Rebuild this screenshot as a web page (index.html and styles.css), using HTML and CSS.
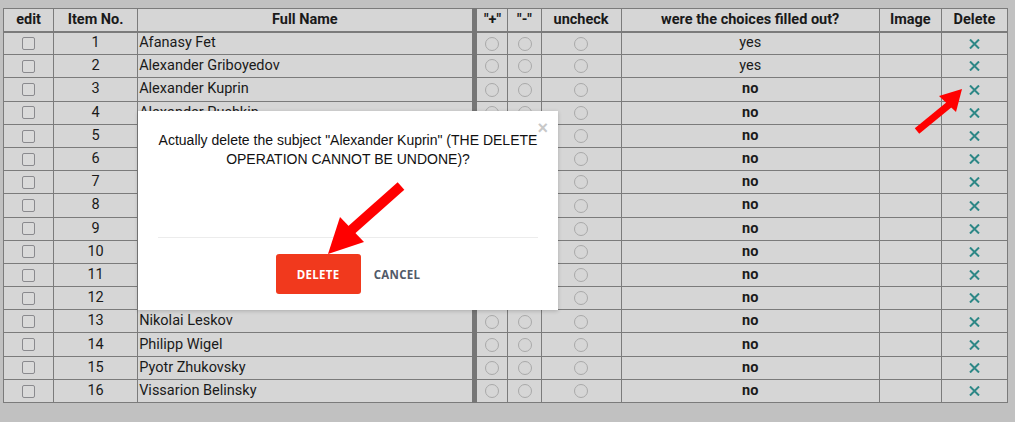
FILE: index.html
```html
<!DOCTYPE html>
<html>
<head>
<meta charset="utf-8">
<link rel="stylesheet" href="styles.css">
</head>
<body>
<div class="page">
<table class="grid">
  <colgroup>
    <col class="c-edit"><col class="c-no"><col class="c-name"><col class="c-plus"><col class="c-minus"><col class="c-unc"><col class="c-fill"><col class="c-img"><col class="c-del">
  </colgroup>
  <thead>
    <tr><th>edit</th><th>Item No.</th><th class="name sep">Full Name</th><th>"+"</th><th>"-"</th><th>uncheck</th><th>were the choices filled out?</th><th>Image</th><th>Delete</th></tr>
  </thead>
  <tbody>
    <tr><td><span class="cb"></span></td><td>1</td><td class="name sep">Afanasy Fet</td><td><span class="rd"></span></td><td><span class="rd"></span></td><td><span class="rd"></span></td><td>yes</td><td></td><td><svg class="x" viewBox="0 0 11 10"><path d="M1 0.5L10 9.5M10 0.5L1 9.5"/></svg></td></tr>
    <tr><td><span class="cb"></span></td><td>2</td><td class="name sep">Alexander Griboyedov</td><td><span class="rd"></span></td><td><span class="rd"></span></td><td><span class="rd"></span></td><td>yes</td><td></td><td><svg class="x" viewBox="0 0 11 10"><path d="M1 0.5L10 9.5M10 0.5L1 9.5"/></svg></td></tr>
    <tr><td><span class="cb"></span></td><td>3</td><td class="name sep">Alexander Kuprin</td><td><span class="rd"></span></td><td><span class="rd"></span></td><td><span class="rd"></span></td><td class="b">no</td><td></td><td><svg class="x" viewBox="0 0 11 10"><path d="M1 0.5L10 9.5M10 0.5L1 9.5"/></svg></td></tr>
    <tr><td><span class="cb"></span></td><td>4</td><td class="name sep">Alexander Pushkin</td><td><span class="rd"></span></td><td><span class="rd"></span></td><td><span class="rd"></span></td><td class="b">no</td><td></td><td><svg class="x" viewBox="0 0 11 10"><path d="M1 0.5L10 9.5M10 0.5L1 9.5"/></svg></td></tr>
    <tr><td><span class="cb"></span></td><td>5</td><td class="name sep">Anton Chekhov</td><td><span class="rd"></span></td><td><span class="rd"></span></td><td><span class="rd"></span></td><td class="b">no</td><td></td><td><svg class="x" viewBox="0 0 11 10"><path d="M1 0.5L10 9.5M10 0.5L1 9.5"/></svg></td></tr>
    <tr><td><span class="cb"></span></td><td>6</td><td class="name sep">Fyodor Dostoevsky</td><td><span class="rd"></span></td><td><span class="rd"></span></td><td><span class="rd"></span></td><td class="b">no</td><td></td><td><svg class="x" viewBox="0 0 11 10"><path d="M1 0.5L10 9.5M10 0.5L1 9.5"/></svg></td></tr>
    <tr><td><span class="cb"></span></td><td>7</td><td class="name sep">Fyodor Tyutchev</td><td><span class="rd"></span></td><td><span class="rd"></span></td><td><span class="rd"></span></td><td class="b">no</td><td></td><td><svg class="x" viewBox="0 0 11 10"><path d="M1 0.5L10 9.5M10 0.5L1 9.5"/></svg></td></tr>
    <tr><td><span class="cb"></span></td><td>8</td><td class="name sep">Ivan Goncharov</td><td><span class="rd"></span></td><td><span class="rd"></span></td><td><span class="rd"></span></td><td class="b">no</td><td></td><td><svg class="x" viewBox="0 0 11 10"><path d="M1 0.5L10 9.5M10 0.5L1 9.5"/></svg></td></tr>
    <tr><td><span class="cb"></span></td><td>9</td><td class="name sep">Ivan Turgenev</td><td><span class="rd"></span></td><td><span class="rd"></span></td><td><span class="rd"></span></td><td class="b">no</td><td></td><td><svg class="x" viewBox="0 0 11 10"><path d="M1 0.5L10 9.5M10 0.5L1 9.5"/></svg></td></tr>
    <tr><td><span class="cb"></span></td><td>10</td><td class="name sep">Leo Tolstoy</td><td><span class="rd"></span></td><td><span class="rd"></span></td><td><span class="rd"></span></td><td class="b">no</td><td></td><td><svg class="x" viewBox="0 0 11 10"><path d="M1 0.5L10 9.5M10 0.5L1 9.5"/></svg></td></tr>
    <tr><td><span class="cb"></span></td><td>11</td><td class="name sep">Mikhail Lermontov</td><td><span class="rd"></span></td><td><span class="rd"></span></td><td><span class="rd"></span></td><td class="b">no</td><td></td><td><svg class="x" viewBox="0 0 11 10"><path d="M1 0.5L10 9.5M10 0.5L1 9.5"/></svg></td></tr>
    <tr><td><span class="cb"></span></td><td>12</td><td class="name sep">Nikolai Gogol</td><td><span class="rd"></span></td><td><span class="rd"></span></td><td><span class="rd"></span></td><td class="b">no</td><td></td><td><svg class="x" viewBox="0 0 11 10"><path d="M1 0.5L10 9.5M10 0.5L1 9.5"/></svg></td></tr>
    <tr><td><span class="cb"></span></td><td>13</td><td class="name sep">Nikolai Leskov</td><td><span class="rd"></span></td><td><span class="rd"></span></td><td><span class="rd"></span></td><td class="b">no</td><td></td><td><svg class="x" viewBox="0 0 11 10"><path d="M1 0.5L10 9.5M10 0.5L1 9.5"/></svg></td></tr>
    <tr><td><span class="cb"></span></td><td>14</td><td class="name sep">Philipp Wigel</td><td><span class="rd"></span></td><td><span class="rd"></span></td><td><span class="rd"></span></td><td class="b">no</td><td></td><td><svg class="x" viewBox="0 0 11 10"><path d="M1 0.5L10 9.5M10 0.5L1 9.5"/></svg></td></tr>
    <tr><td><span class="cb"></span></td><td>15</td><td class="name sep">Pyotr Zhukovsky</td><td><span class="rd"></span></td><td><span class="rd"></span></td><td><span class="rd"></span></td><td class="b">no</td><td></td><td><svg class="x" viewBox="0 0 11 10"><path d="M1 0.5L10 9.5M10 0.5L1 9.5"/></svg></td></tr>
    <tr><td><span class="cb"></span></td><td>16</td><td class="name sep">Vissarion Belinsky</td><td><span class="rd"></span></td><td><span class="rd"></span></td><td><span class="rd"></span></td><td class="b">no</td><td></td><td><svg class="x" viewBox="0 0 11 10"><path d="M1 0.5L10 9.5M10 0.5L1 9.5"/></svg></td></tr>
  </tbody>
</table>

<div class="modal">
  <span class="close">×</span>
  <p class="msg">Actually delete the subject "Alexander Kuprin" (THE DELETE OPERATION CANNOT BE UNDONE)?</p>
  <div class="divider"></div>
  <div class="actions">
    <button class="btn-del">DELETE</button>
    <button class="btn-cancel">CANCEL</button>
  </div>
</div>

<svg class="arrows" width="1015" height="422" viewBox="0 0 1015 422">
  <path class="shaft" d="M401 186 L348 233"/>
  <polygon points="328,254 340,217 364,242"/>
  <path class="shaft2" d="M917 131 L950 104"/>
  <polygon points="962,89 939,96 956,112"/>
</svg>
</div>
</body>
</html>
```

FILE: styles.css
```css
* { box-sizing: border-box; }
html, body { margin: 0; padding: 0; }
body {
  background: #c1c1c1;
  width: 1015px;
  height: 422px;
  overflow: hidden;
}
.page {
  position: relative;
  width: 1015px;
  height: 422px;
  padding: 8px 0 0 3px;
}
.grid {
  border-collapse: collapse;
  table-layout: fixed;
  width: 1005px;
  font-family: Roboto, "Noto Sans", sans-serif;
  font-size: 14.5px;
  color: #1a1a1a;
  background: #d6d6d6;
}
.c-edit { width: 50px; }
.c-no { width: 84px; }
.c-name { width: 337px; }
.c-plus { width: 33px; }
.c-minus { width: 33px; }
.c-unc { width: 80px; }
.c-fill { width: 258px; }
.c-img { width: 62px; }
.c-del { width: 66px; }
.grid th, .grid td {
  border: 1px solid #7b7b7b;
  text-align: center;
  vertical-align: middle;
  padding: 0 2px;
  white-space: nowrap;
  overflow: hidden;
}
.grid th {
  height: 23px;
  font-weight: 700;
  border-bottom: 2px solid #7b7b7b;
}
.grid td { height: 23.2px; line-height: 16px; }
.grid .name { text-align: left; padding-left: 1px; }
.grid th.name { text-align: center; }
.grid .sep { border-right: 5px solid #767676; }
.grid .b { font-weight: 700; }
.cb {
  display: inline-block;
  width: 13px;
  height: 13px;
  border: 1px solid #8a8a8e;
  border-radius: 2px;
  background: #dadada;
  vertical-align: middle;
}
.rd {
  display: inline-block;
  width: 14px;
  height: 14px;
  border: 1px solid #a9a9a9;
  border-radius: 50%;
  vertical-align: middle;
}
.x {
  display: inline-block;
  width: 11px;
  height: 10px;
  vertical-align: middle;
  stroke: #2d8786;
  stroke-width: 2;
  fill: none;
}
.modal {
  position: absolute;
  left: 138px;
  top: 111px;
  width: 420px;
  height: 199px;
  background: #fff;
  box-shadow: 0 1px 4px rgba(0,0,0,0.2);
  padding: 20px 20px 0;
  display: flex;
  flex-direction: column;
  align-items: center;
}
.close {
  position: absolute;
  right: 10px;
  top: 7px;
  font-family: "Liberation Sans", Arial, sans-serif;
  font-size: 18px;
  color: #c8c8c8;
  font-weight: 700;
}
.msg {
  margin: 0;
  font-family: "Liberation Sans", Arial, sans-serif;
  font-size: 14px;
  line-height: 19px;
  color: #111;
  text-align: center;
  width: 380px;
}
.divider {
  width: 380px;
  height: 1px;
  background: #ececec;
  margin-top: 68px;
}
.actions {
  display: flex;
  align-items: center;
  gap: 13px;
  margin-top: 16px;
}
.btn-del {
  width: 85px;
  height: 40px;
  border: none;
  border-radius: 3px;
  background: #f1391d;
  color: #fff;
  font-family: "Open Sans", sans-serif;
  font-weight: 700;
  font-size: 11.5px;
  letter-spacing: 0.3px;
  padding: 0;
}
.btn-cancel {
  border: none;
  background: none;
  color: #515a68;
  font-family: "Open Sans", sans-serif;
  font-weight: 700;
  font-size: 11.5px;
  letter-spacing: 0.3px;
  padding: 0;
}
.arrows {
  position: absolute;
  left: 0;
  top: 0;
  pointer-events: none;
}
.arrows polygon { fill: #f00; }
.arrows .shaft { stroke: #f00; stroke-width: 10; }
.arrows .shaft2 { stroke: #f00; stroke-width: 7; }
```
